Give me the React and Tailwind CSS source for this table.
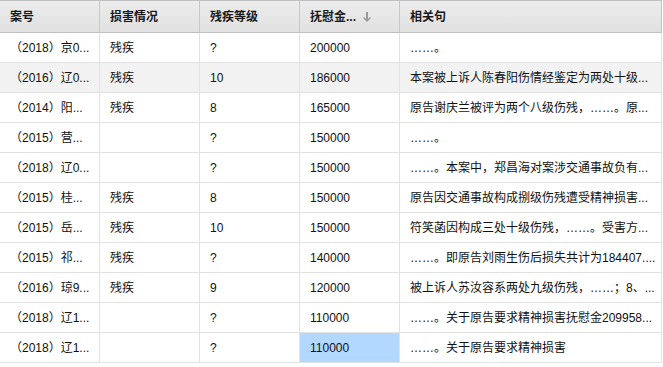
const rows = [
  { no: '（2018）京0...', kind: '残疾', level: '?', amount: '200000', text: '……。' },
  { no: '（2016）辽0...', kind: '残疾', level: '10', amount: '186000', text: '本案被上诉人陈春阳伤情经鉴定为两处十级...', hover: true },
  { no: '（2014）阳...', kind: '残疾', level: '8', amount: '165000', text: '原告谢庆兰被评为两个八级伤残，……。原...' },
  { no: '（2015）营...', kind: '', level: '?', amount: '150000', text: '……。' },
  { no: '（2018）辽0...', kind: '', level: '?', amount: '150000', text: '……。本案中，郑昌海对案涉交通事故负有...' },
  { no: '（2015）桂...', kind: '残疾', level: '8', amount: '150000', text: '原告因交通事故构成捌级伤残遭受精神损害...' },
  { no: '（2015）岳...', kind: '残疾', level: '10', amount: '150000', text: '符笑菡因构成三处十级伤残，……。受害方...' },
  { no: '（2015）祁...', kind: '残疾', level: '?', amount: '140000', text: '……。即原告刘雨生伤后损失共计为184407....' },
  { no: '（2016）琼9...', kind: '残疾', level: '9', amount: '120000', text: '被上诉人苏汝容系两处九级伤残，……；8、...' },
  { no: '（2018）辽1...', kind: '', level: '?', amount: '110000', text: '……。关于原告要求精神损害抚慰金209958...' },
  { no: '（2018）辽1...', kind: '', level: '?', amount: '110000', text: '……。关于原告要求精神损害', selected: true },
];

function HeadCell({ children, last }) {
  return (
    <div className={`${last ? 'flex-1 border-r border-[#c4c4c4]' : 'w-[100px] border-r border-[#c8c8c8]'} h-full flex items-center pl-[10px] font-bold`}>
      {children}
    </div>
  );
}

function Cell({ children, last, className = '' }) {
  return (
    <div className={`${last ? 'flex-1' : 'w-[100px]'} h-full border-r border-[#e2e2e2] flex items-center pl-[10px] whitespace-nowrap overflow-hidden ${className}`}>
      {children}
    </div>
  );
}

export default function App() {
  return (
    <div
      className="w-[663px] h-[367px] bg-white overflow-hidden text-[12px] text-[#111]"
      style={{ fontFamily: '"Liberation Sans", Arial, "Noto Sans CJK SC", sans-serif' }}
    >
      <div className="w-[662px]">
        {/* Header */}
        <div className="flex h-[33px] border-t border-b border-[#c0c0c0] bg-gradient-to-b from-[#ececec] to-[#e1e1e1] text-[#1a1a1a]">
          <HeadCell>案号</HeadCell>
          <HeadCell>损害情况</HeadCell>
          <HeadCell>残疾等级</HeadCell>
          <HeadCell>
            <span>抚慰金...</span>
            <svg className="ml-[6px] w-[10px] h-[12px]" viewBox="0 0 10 12" fill="none" stroke="#9a9a9a" strokeWidth="2">
              <path d="M5 1v9" />
              <path d="M1.5 6.5L5 10l3.5-3.5" strokeWidth="1.5" />
            </svg>
          </HeadCell>
          <HeadCell last>相关句</HeadCell>
        </div>

        {/* Rows */}
        {rows.map((r, i) => (
          <div
            key={i}
            className={`flex h-[30px] border-b border-[#e2e2e2] ${r.hover ? 'bg-[#f2f2f2]' : 'bg-white'}`}
          >
            <Cell>{r.no}</Cell>
            <Cell>{r.kind}</Cell>
            <Cell>{r.level}</Cell>
            <Cell className={r.selected ? 'bg-[#b3d8ff]' : ''}>{r.amount}</Cell>
            <Cell last>{r.text}</Cell>
          </div>
        ))}
      </div>
    </div>
  );
}
